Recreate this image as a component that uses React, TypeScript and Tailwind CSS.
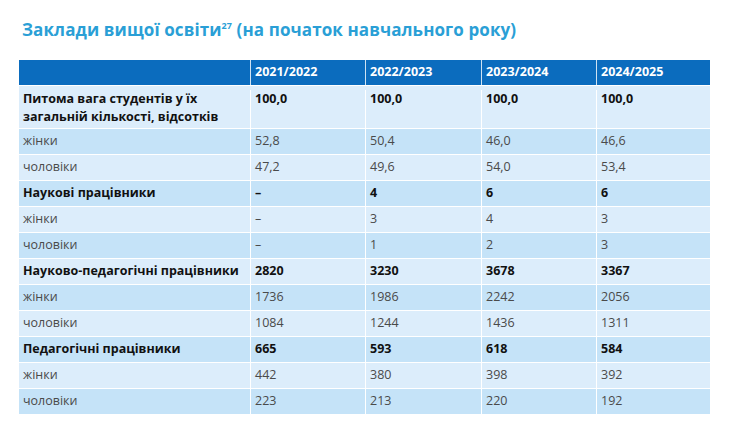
const years = ["2021/2022", "2022/2023", "2023/2024", "2024/2025"];

type Row = { label: string; values: string[]; bold?: boolean; tall?: boolean };

const rows: Row[] = [
  { label: "Питома вага студентів у їх загальній кількості, відсотків", values: ["100,0", "100,0", "100,0", "100,0"], bold: true, tall: true },
  { label: "жінки", values: ["52,8", "50,4", "46,0", "46,6"] },
  { label: "чоловіки", values: ["47,2", "49,6", "54,0", "53,4"] },
  { label: "Наукові працівники", values: ["–", "4", "6", "6"], bold: true },
  { label: "жінки", values: ["–", "3", "4", "3"] },
  { label: "чоловіки", values: ["–", "1", "2", "3"] },
  { label: "Науково-педагогічні працівники", values: ["2820", "3230", "3678", "3367"], bold: true },
  { label: "жінки", values: ["1736", "1986", "2242", "2056"] },
  { label: "чоловіки", values: ["1084", "1244", "1436", "1311"] },
  { label: "Педагогічні працівники", values: ["665", "593", "618", "584"], bold: true },
  { label: "жінки", values: ["442", "380", "398", "392"] },
  { label: "чоловіки", values: ["223", "213", "220", "192"] },
];

export default function App() {
  return (
    <div className="w-[738px] h-[442px] bg-white" style={{ fontFamily: '"Open Sans", "Noto Sans", sans-serif' }}>
      <div className="pt-[18px] pl-[22px] text-[17px] font-bold text-[#2a9fd6] leading-[24px] tracking-[0.1px]">
        Заклади вищої освіти<sup className="text-[9px] leading-none relative top-[-1px] align-[6px]">27</sup> (на початок навчального року)
      </div>
      <div className="ml-[19px] mt-[18px] w-[691px]">
        <div className="grid grid-cols-[231px_115px_116px_115px_114px] bg-[#0b6cbe] h-[25px] text-white font-bold text-[12.5px]">
          <div />
          {years.map((y) => (
            <div key={y} className="border-l border-white/80 pl-[4px] flex items-center">{y}</div>
          ))}
        </div>
        {rows.map((r, i) => (
          <div
            key={i}
            className={`grid grid-cols-[231px_115px_116px_115px_114px] border-t border-white text-[12.5px] ${
              i % 2 === 0 ? "bg-[#dcedfb]" : "bg-[#c5e3f8]"
            } ${r.bold ? "font-bold text-[#111]" : "text-[#4a4a4a]"} ${r.tall ? "h-[43px] items-start pt-[4px] leading-[18px]" : "h-[26px] items-center"}`}
          >
            <div className="pl-[4px] pr-2">{r.label}</div>
            {r.values.map((v, j) => (
              <div key={j} className="border-l border-white pl-[4px] self-stretch flex items-start">
                <span className={r.tall ? "" : "self-center"}>{v}</span>
              </div>
            ))}
          </div>
        ))}
      </div>
    </div>
  );
}
